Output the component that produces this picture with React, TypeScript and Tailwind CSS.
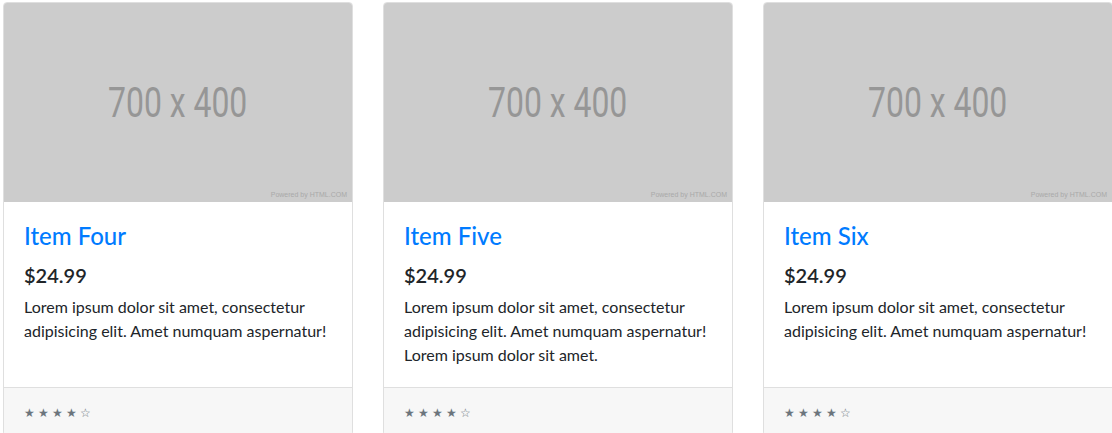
const items = [
  { title: "Item Four", text: "Lorem ipsum dolor sit amet, consectetur adipisicing elit. Amet numquam aspernatur!" },
  { title: "Item Five", text: "Lorem ipsum dolor sit amet, consectetur adipisicing elit. Amet numquam aspernatur! Lorem ipsum dolor sit amet." },
  { title: "Item Six", text: "Lorem ipsum dolor sit amet, consectetur adipisicing elit. Amet numquam aspernatur!" },
]

function Placeholder() {
  return (
    <div className="relative flex h-[199px] w-full shrink-0 items-center justify-center rounded-t-[3px] bg-[#cccccc]">
      <span className="inline-block scale-x-[0.76] font-['Roboto',sans-serif] text-[42px] leading-none text-[#969696]">700 x 400</span>
      <span className="absolute bottom-[2px] right-[5px] font-['Liberation_Sans',sans-serif] text-[7px] text-[#a9a9a9]">
        Powered by HTML.COM
      </span>
    </div>
  )
}

function ItemCard({ title, text }: { title: string; text: string }) {
  return (
    <div className="flex w-[350px] shrink-0 flex-col rounded-[4px] border border-[#dfdfdf] bg-white">
      <Placeholder />
      <div className="flex-1 p-5">
        <h4 className="mb-3 text-[24px] font-medium leading-[1.2] text-[#007bff]">{title}</h4>
        <h5 className="mb-2 text-[20px] font-semibold leading-[1.2] text-[#212529]">$24.99</h5>
        <p className="text-[16px] leading-6 text-[#212529]">{text}</p>
      </div>
      <div className="border-t border-[#dfdfdf] bg-[#f7f7f7] px-5 pb-3 pt-[11px]">
        <small className="text-[11.5px] leading-[19.2px] text-[#6c757d]">&#9733; &#9733; &#9733; &#9733; &#9734;</small>
      </div>
    </div>
  )
}

export default function App() {
  return (
    <div className="h-[433px] overflow-hidden bg-white font-['Lato','Liberation_Sans',sans-serif]">
      <div className="flex gap-[30px] pl-[3px] pt-[2px]">
        {items.map((it) => (
          <ItemCard key={it.title} title={it.title} text={it.text} />
        ))}
      </div>
    </div>
  )
}
